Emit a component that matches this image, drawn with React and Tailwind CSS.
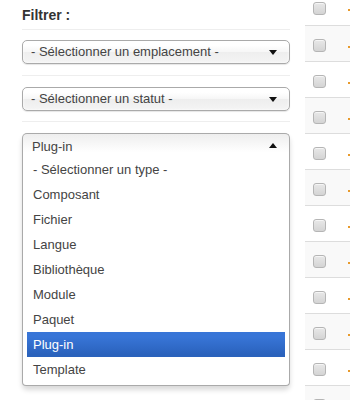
function Caret({ up = false }) {
  return (
    <svg width="8" height="5" viewBox="0 0 8 5" className="block">
      {up ? <polygon points="0,5 8,5 4,0" fill="#111" /> : <polygon points="0,0 8,0 4,5" fill="#111" />}
    </svg>
  );
}

function ClosedSelect({ label }) {
  return (
    <div className="h-[24px] rounded-[5px] border border-[#aaa] bg-[linear-gradient(#fff_20%,#f6f6f6_50%,#eee_52%,#f4f4f4_100%)] shadow-[0_1px_1px_rgba(0,0,0,0.1),inset_0_0_3px_#fff] flex items-center pl-[8px] pr-[12px] text-[#444]">
      <span className="flex-1 leading-[22px] whitespace-nowrap overflow-hidden">{label}</span>
      <Caret />
    </div>
  );
}

export default function App() {
  const rows = Array.from({ length: 12 });
  const items = [
    "- Sélectionner un type -",
    "Composant",
    "Fichier",
    "Langue",
    "Bibliothèque",
    "Module",
    "Paquet",
    "Plug-in",
    "Template",
  ];
  return (
    <div className="w-[350px] h-[400px] overflow-hidden bg-white flex font-['Liberation_Sans',Arial,sans-serif] text-[13px] text-[#333]">
      <div className="w-[290px] shrink-0 pl-[22px]">
        <div className="h-[30px] pt-[8px] text-[14px] font-bold leading-[14px] border-b border-[#eee]">Filtrer :</div>
        <div className="mt-[10px]">
          <ClosedSelect label="- Sélectionner un emplacement -" />
        </div>
        <div className="mt-[11px] border-t border-[#eee]" />
        <div className="mt-[11px]">
          <ClosedSelect label="- Sélectionner un statut -" />
        </div>
        <div className="mt-[10px] border-t border-[#eee]" />
        <div className="mt-[11px] relative shadow-[0_4px_5px_rgba(0,0,0,0.15)] rounded-[5px]">
          <div className="h-[24px] rounded-t-[5px] border border-b-0 border-[#aaa] bg-[linear-gradient(#eee_0%,#fff_80%)] flex items-center pl-[9px] pr-[12px] text-[#444]">
            <span className="flex-1 leading-[22px] pt-[2px]">Plug-in</span>
            <Caret up />
          </div>
          <div className="border border-t-0 border-[#aaa] rounded-b-[4px] bg-white pl-[4px] pr-[4px] pb-[3px]">
            {items.map((it, i) => (
              <div
                key={i}
                className={
                  "h-[25px] px-[6px] leading-[25px] whitespace-nowrap " +
                  (i === 7
                    ? "bg-[linear-gradient(#3875d7_20%,#2a62bc_90%)] text-white"
                    : "text-[#444]")
                }
              >
                {it}
              </div>
            ))}
          </div>
        </div>
      </div>
      <div className="ml-[15px] flex-1 -mt-[11px]">
        {rows.map((_, i) => (
          <div
            key={i}
            className={
              "h-[36px] flex items-center pl-[8px] " +
              (i > 0 ? "border-t border-[#ddd] " : "") +
              (i % 2 === 1 ? "bg-[#f9f9f9]" : "bg-white")
            }
          >
            <div className="w-[13px] h-[13px] mt-[3px] rounded-[3px] border border-[#b5b5b5] bg-[linear-gradient(#e8e8e8,#d4d4d4)] shadow-[inset_0_1px_0_rgba(255,255,255,0.6)]" />
            <div className="ml-[22px] mt-[6px] w-[2px] h-[2px] bg-[#e89a2c]" />
          </div>
        ))}
      </div>
    </div>
  );
}
